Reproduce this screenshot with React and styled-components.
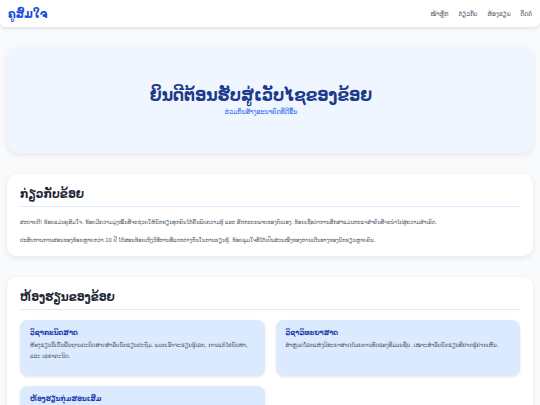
import React from 'react'
import styled, { createGlobalStyle } from 'styled-components'

const GlobalStyle = createGlobalStyle`
    body {
        margin: 0;
        background: #f8fafc;
        font-family: "DejaVu Sans Condensed", "DejaVu Sans", sans-serif;
        color: #374151;
    }
`

const Header = styled.header`
    height: 27px;
    background: #fff;
    display: flex;
    align-items: center;
    justify-content: space-between;
    padding: 0 8px;
    border-radius: 0 0 6px 6px;
    box-shadow: 0 1px 4px rgba(0, 0, 0, 0.12);
`

const Logo = styled.div`
    font-size: 11.5px;
    font-weight: 700;
    color: #1d4ed8;
`

const Nav = styled.nav`
    display: flex;
    gap: 10px;
`

const NavLink = styled.a`
    font-size: 6.5px;
    color: #4b5563;
    text-decoration: none;
`

const Main = styled.main`
    padding: 20px 7px 0;
    display: flex;
    flex-direction: column;
    gap: 21px;
`

const Hero = styled.section`
    height: 106px;
    padding-right: 18px;
    background: #eff6ff;
    border-radius: 12px;
    box-shadow: 0 2px 6px rgba(0, 0, 0, 0.08);
    display: flex;
    flex-direction: column;
    align-items: center;
    justify-content: center;
    gap: 3px;
`

const HeroTitle = styled.h1`
    margin: 0;
    font-size: 17.3px;
    font-weight: 700;
    color: #1e3a8a;
`

const HeroSub = styled.p`
    margin: 0;
    font-size: 7px;
    color: #2563eb;
`

const Card = styled.section`
    background: #fff;
    border-radius: 10px;
    box-shadow: 0 2px 6px rgba(0, 0, 0, 0.08);
    padding: 13px 13px 7px;
`

const SectionTitle = styled.h2`
    margin: 0 0 6px;
    padding-bottom: 5px;
    font-size: 12px;
    font-weight: 700;
    color: #1f2937;
    border-bottom: 1px solid #dbeafe;
`

const Para = styled.p`
    margin: 0;
    font-size: 5.8px;
    line-height: 18px;
    color: #4b5563;
`

const Grid = styled.div`
    display: grid;
    grid-template-columns: 1fr 1fr;
    gap: 10px 11px;
    padding-top: 4px;
`

const Course = styled.div`
    background: #dbeafe;
    border-radius: 8px;
    box-shadow: 0 1px 3px rgba(0, 0, 0, 0.1);
    padding: 8px 10px 8px;
    min-height: 40px;
`

const CourseTitle = styled.h3`
    margin: 0 0 2px;
    font-size: 7.5px;
    font-weight: 700;
    color: #1e40af;
`

const CourseText = styled.p`
    margin: 0;
    font-size: 6px;
    line-height: 11px;
    color: #4b5563;
`

const courses = [
    {
        title: 'ວິຊາຄະນິດສາດ',
        text: 'ຫ້ອງຮຽນນີ້ເນັ້ນພື້ນຖານຄະນິດສາດສຳລັບນັກຮຽນປະຖົມ. ພວກເຮົາຈະຮຽນຮູ້ເລກ, ການແກ້ໄຂບັນຫາ, ແລະ ເລຂາຄະນິດ.',
    },
    {
        title: 'ວິຊາວິທະຍາສາດ',
        text: 'ສຳຫຼວດໂລກແຫ່ງວິທະຍາສາດດ້ວຍການທົດລອງທີ່ມ່ວນຊື່ນ. ເໝາະສຳລັບນັກຮຽນທີ່ຢາກຮູ້ຢາກເຫັນ.',
    },
    {
        title: 'ຫ້ອງຮຽນກຸ່ມສອນເສີມ',
        text: 'ຊ່ວຍນັກຮຽນທົບທວນບົດຮຽນ ແລະ ກຽມຕົວສຳລັບການສອບເສັງ.',
    },
]

const App = () => {
    return <>
        <GlobalStyle />
        <Header>
            <Logo>ຄູສົມໃຈ</Logo>
            <Nav>
                <NavLink href="#">ໜ້າຫຼັກ</NavLink>
                <NavLink href="#">ກ່ຽວກັບ</NavLink>
                <NavLink href="#">ຫ້ອງຮຽນ</NavLink>
                <NavLink href="#">ຕິດຕໍ່</NavLink>
            </Nav>
        </Header>
        <Main>
            <Hero>
                <HeroTitle>ຍິນດີຕ້ອນຮັບສູ່ເວັບໄຊຂອງຂ້ອຍ</HeroTitle>
                <HeroSub>ຮ່ວມກັນສ້າງອະນາຄົດທີ່ດີຂຶ້ນ</HeroSub>
            </Hero>
            <Card>
                <SectionTitle>ກ່ຽວກັບຂ້ອຍ</SectionTitle>
                <Para>
                    ສະບາຍດີ! ຂ້ອຍແມ່ນຄູສົມໃຈ. ຂ້ອຍມີຄວາມມຸ່ງໝັ້ນທີ່ຈະຊ່ວຍໃຫ້ນັກຮຽນທຸກຄົນໄດ້ຄົ້ນພົບຄວາມຮູ້ ແລະ ສັກກະຍະພາບຂອງຕົນເອງ. ຂ້ອຍເຊື່ອວ່າການສຶກສາແມ່ນກະແຈສຳຄັນທີ່ຈະນຳໄປສູ່ຄວາມສຳເລັດ.
                </Para>
                <Para>
                    ປະສົບການການສອນຂອງຂ້ອຍຫຼາຍກວ່າ 10 ປີ ໄດ້ສອນຂ້ອຍເຖິງວິທີການທີ່ແຕກຕ່າງກັນໃນການຮຽນຮູ້. ຂ້ອຍພູມໃຈທີ່ໄດ້ເປັນສ່ວນໜຶ່ງຂອງການເດີນທາງຂອງນັກຮຽນຫຼາຍຄົນ.
                </Para>
            </Card>
            <Card>
                <SectionTitle>ຫ້ອງຮຽນຂອງຂ້ອຍ</SectionTitle>
                <Grid>
                    {courses.map(c => (
                        <Course key={c.title}>
                            <CourseTitle>{c.title}</CourseTitle>
                            <CourseText>{c.text}</CourseText>
                        </Course>
                    ))}
                </Grid>
            </Card>
        </Main>
    </>
}

export default App
